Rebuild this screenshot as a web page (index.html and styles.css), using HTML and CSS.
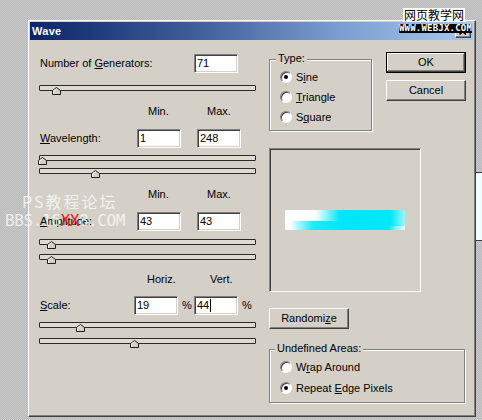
FILE: index.html
```html
<!DOCTYPE html>
<html>
<head>
<meta charset="utf-8">
<title>Wave</title>
<link rel="stylesheet" href="styles.css">
</head>
<body>
<div class="bgwin"></div>
<div class="desk">
  <div class="window">
    <div class="titlebar">
      <span class="title">Wave</span>
      <span class="close"><svg width="8" height="7" viewBox="0 0 8 7"><path d="M0.5 0.5L7 6.5M7 0.5L0.5 6.5" stroke="#000" stroke-width="1.6" fill="none"/></svg></span>
    </div>
    <div class="content">
      <div class="left">
        <div class="row r1"><span class="lbl">Number of <u>G</u>enerators:</span><span class="field">71</span></div>
        <div class="slider s1"><div class="track"></div><svg class="thumb" style="left:13px" viewBox="0 0 9 8"><path d="M0.5 7.5V3.5L4.5 0.5L8.5 3.5V7.5Z" fill="#d4d0c8" stroke="#1e1e1e"/><path d="M1.5 7V3.9L4.5 1.7" stroke="#fff" fill="none"/></svg></div>
        <div class="heads h1"><span class="h-min">Min.</span><span>Max.</span></div>
        <div class="row r2"><span class="lbl"><u>W</u>avelength:</span><span class="field">1</span><span class="field gap">248</span></div>
        <div class="slider s2"><div class="track"></div><svg class="thumb" style="left:-1px" viewBox="0 0 9 8"><path d="M0.5 7.5V3.5L4.5 0.5L8.5 3.5V7.5Z" fill="#d4d0c8" stroke="#1e1e1e"/><path d="M1.5 7V3.9L4.5 1.7" stroke="#fff" fill="none"/></svg></div>
        <div class="slider s3"><div class="track"></div><svg class="thumb" style="left:52px" viewBox="0 0 9 8"><path d="M0.5 7.5V3.5L4.5 0.5L8.5 3.5V7.5Z" fill="#d4d0c8" stroke="#1e1e1e"/><path d="M1.5 7V3.9L4.5 1.7" stroke="#fff" fill="none"/></svg></div>
        <div class="heads h2"><span class="h-min">Min.</span><span>Max.</span></div>
        <div class="row r3"><span class="lbl"><u>A</u>mplitude:</span><span class="field">43</span><span class="field gap">43</span></div>
        <div class="slider s4"><div class="track"></div><svg class="thumb" style="left:8px" viewBox="0 0 9 8"><path d="M0.5 7.5V3.5L4.5 0.5L8.5 3.5V7.5Z" fill="#d4d0c8" stroke="#1e1e1e"/><path d="M1.5 7V3.9L4.5 1.7" stroke="#fff" fill="none"/></svg></div>
        <div class="slider s5"><div class="track"></div><svg class="thumb" style="left:8px" viewBox="0 0 9 8"><path d="M0.5 7.5V3.5L4.5 0.5L8.5 3.5V7.5Z" fill="#d4d0c8" stroke="#1e1e1e"/><path d="M1.5 7V3.9L4.5 1.7" stroke="#fff" fill="none"/></svg></div>
        <div class="heads h3"><span class="h-horiz">Horiz.</span><span>Vert.</span></div>
        <div class="row r4"><span class="lbl"><u>S</u>cale:</span><span class="field">19</span><span class="pct">%</span><span class="field">44<span class="caret"></span></span><span class="pct">%</span></div>
        <div class="slider s6"><div class="track"></div><svg class="thumb" style="left:37px" viewBox="0 0 9 8"><path d="M0.5 7.5V3.5L4.5 0.5L8.5 3.5V7.5Z" fill="#d4d0c8" stroke="#1e1e1e"/><path d="M1.5 7V3.9L4.5 1.7" stroke="#fff" fill="none"/></svg></div>
        <div class="slider s7"><div class="track"></div><svg class="thumb" style="left:91px" viewBox="0 0 9 8"><path d="M0.5 7.5V3.5L4.5 0.5L8.5 3.5V7.5Z" fill="#d4d0c8" stroke="#1e1e1e"/><path d="M1.5 7V3.9L4.5 1.7" stroke="#fff" fill="none"/></svg></div>
      </div>
      <div class="right">
        <div class="top">
          <div class="group type">
            <span class="glabel">Type:</span>
            <div class="opts">
              <div class="opt"><span class="radio on"></span><span>S<u>i</u>ne</span></div>
              <div class="opt"><span class="radio"></span><span><u>T</u>riangle</span></div>
              <div class="opt"><span class="radio"></span><span>S<u>q</u>uare</span></div>
            </div>
          </div>
          <div class="buttons">
            <div class="btn default">OK</div>
            <div class="btn">Cancel</div>
          </div>
        </div>
        <div class="preview"><div class="wave"></div></div>
        <div class="btn randomize">Randomi<u>z</u>e</div>
        <div class="group undef">
          <span class="glabel">Undefined Areas:</span>
          <div class="opts">
            <div class="opt"><span class="radio"></span><span>W<u>r</u>ap Around</span></div>
            <div class="opt"><span class="radio on"></span><span>Repeat <u>E</u>dge Pixels</span></div>
          </div>
        </div>
      </div>
    </div>
  </div>
</div>
<div class="wm-cn">网页教学网</div>
<div class="wm-url">WWW.WEBJX.COM</div>
<div class="wm-ps">PS教程论坛</div>
<div class="wm-bbs">BBS.16<span class="x">XX</span>8.COM</div>
</body>
</html>
```
FILE: styles.css
```css
* { box-sizing: border-box; }

body {
  margin: 0;
  width: 482px;
  height: 420px;
  overflow: hidden;
  position: relative;
  background: repeating-conic-gradient(#bababa 0 25%, #c8c8c8 0 50%) 0 0 / 2px 2px;
  font-family: "Liberation Sans", Arial, sans-serif;
  font-size: 11px;
  line-height: 13px;
  color: #000;
}

u { text-decoration: underline; text-underline-offset: 1px; }

.desk { padding: 20px 0 0 28px; }

.bgwin {
  position: absolute;
  left: 476px;
  top: 172px;
  width: 6px;
  height: 69px;
  background: #effdfd;
  border-top: 1px solid #3a3a3a;
  border-bottom: 1px solid #3a3a3a;
}

.window {
  width: 448px;
  height: 397px;
  background: #d4d0c8;
  border: 1px solid;
  border-color: #fff #404040 #404040 #fff;
  box-shadow: inset -1px -1px 0 #808080;
  padding: 1px 2px 2px 1px;
  display: flex;
  flex-direction: column;
}

.titlebar {
  height: 18px;
  flex: none;
  display: flex;
  align-items: center;
  justify-content: space-between;
  padding: 0 2px;
  background: linear-gradient(to right, #0c2568 0%, #44629e 40%, #7c9ed0 70%, #a6c8ee 100%);
}

.title { color: #fff; font-weight: bold; font-size: 11px; letter-spacing: 0.3px; }

.close {
  width: 16px;
  height: 14px;
  background: #d4d0c8;
  border: 1px solid;
  border-color: #fff #404040 #404040 #fff;
  box-shadow: inset -1px -1px 0 #808080;
  display: flex;
  align-items: center;
  justify-content: center;
}

.content { display: flex; flex: 1; }

.left {
  width: 217px;
  margin-left: 9px;
  display: flex;
  flex-direction: column;
}

.row { display: flex; align-items: center; height: 19px; flex: none; }
.lbl { padding-left: 1px; }
.r1 .lbl { width: 155px; }
.r2 .lbl, .r3 .lbl { width: 98px; }
.r4 .lbl { width: 95px; }

.field {
  width: 44px;
  height: 19px;
  flex: none;
  background: #fff;
  border: 1px solid;
  border-color: #808080 #fff #fff #808080;
  box-shadow: inset 1px 1px 0 #404040, inset -1px -1px 0 #d4d0c8;
  padding-left: 2px;
  display: flex;
  align-items: center;
}
.gap { margin-left: 16px; }
.pct { width: 10px; margin-left: 4px; margin-right: 2px; }
.caret { width: 1px; height: 13px; background: #000; margin-left: 1px; }

.heads { display: flex; height: 13px; flex: none; }
.h-min { margin-left: 109px; width: 59px; }
.h-horiz { margin-left: 108px; width: 63px; }

.slider { position: relative; height: 10px; flex: none; }
.track {
  height: 6px;
  border: 1px solid #2a2a2a;
  background: #dedad2;
  border-radius: 1px;
}
.thumb { position: absolute; top: 2px; width: 9px; height: 8px; }

.r1 { margin-top: 14px; }
.s1 { margin-top: 12px; }
.h1 { margin-top: 10px; }
.r2 { margin-top: 11px; }
.s2 { margin-top: 7px; }
.s3 { margin-top: 3px; }
.h2 { margin-top: 10px; }
.r3 { margin-top: 11px; }
.s4 { margin-top: 8px; }
.s5 { margin-top: 5px; }
.h3 { margin-top: 9px; }
.r4 { margin-top: 10px; }
.s6 { margin-top: 7px; }
.s7 { margin-top: 6px; }

.right {
  width: 197px;
  margin-left: 13px;
  display: flex;
  flex-direction: column;
}

.top { display: flex; align-items: flex-start; margin-top: 12px; }

.group {
  border: 1px solid #808080;
  box-shadow: inset 1px 1px 0 #fff, 1px 1px 0 #fff;
  display: flex;
  flex-direction: column;
}
.glabel {
  align-self: flex-start;
  height: 13px;
  margin-top: -8px;
  margin-left: 6px;
  padding: 0 2px;
  background: #d4d0c8;
}
.opts { display: flex; flex-direction: column; margin-top: 2px; }
.opt { display: flex; align-items: center; height: 20px; margin-left: 10px; }

.type { width: 103px; margin-top: 7px; padding-bottom: 3px; }

.undef { width: 196px; margin-top: 20px; padding-bottom: 4px; }
.undef .glabel { margin-left: 5px; }
.undef .opts { gap: 1px; }

.radio {
  width: 12px;
  height: 12px;
  flex: none;
  border-radius: 50%;
  background: #fff;
  border: 1px solid;
  border-color: #808080 #fff #fff #808080;
  box-shadow: inset 1px 1px 0 #404040;
  margin-right: 4px;
  display: flex;
  align-items: center;
  justify-content: center;
}
.radio.on::after {
  content: "";
  width: 4px;
  height: 4px;
  border-radius: 50%;
  background: #000;
}

.buttons { margin-left: 14px; display: flex; flex-direction: column; gap: 7px; }

.btn {
  width: 80px;
  height: 21px;
  flex: none;
  display: flex;
  align-items: center;
  justify-content: center;
  background: #d4d0c8;
  border: 1px solid;
  border-color: #fff #404040 #404040 #fff;
  box-shadow: inset -1px -1px 0 #808080;
}
.btn.default {
  border-color: #000;
  box-shadow: inset -1px -1px 0 #404040, inset 1px 1px 0 #fff, inset -2px -2px 0 #808080;
}

.preview {
  margin-top: 17px;
  width: 152px;
  height: 144px;
  flex: none;
  border: 1px solid;
  border-color: #808080 #fff #fff #808080;
  box-shadow: inset 1px 1px 0 #404040;
  display: flex;
  align-items: center;
  justify-content: center;
}

.wave {
  width: 120px;
  height: 20px;
  background:
    linear-gradient(to right, #fff 25%, rgba(255,255,255,0.6) 33%, rgba(255,255,255,0) 45%) top / 100% 55% no-repeat,
    linear-gradient(to right, rgba(255,255,255,0) 85%, rgba(255,255,255,0.7) 100%) bottom / 100% 20% no-repeat,
    linear-gradient(to right, #fff 4%, #9ef5fc 12%, #1ee9f9 24%, #00e6f8 50%, #00e8fa 88%, #a0f5fd 100%);
}

.randomize { margin-top: 16px; }

.wm-cn {
  position: absolute;
  left: 403px;
  top: 8px;
  padding: 0 1px;
  background: #fff;
  font-family: "Noto Sans CJK SC", sans-serif;
  font-size: 12px;
  line-height: 14px;
  color: #000;
}

.wm-url {
  position: absolute;
  left: 399px;
  top: 24px;
  width: 73px;
  height: 9px;
  background: #000;
  color: #fff;
  font-family: "DejaVu Sans Mono", monospace;
  font-weight: bold;
  font-size: 9px;
  line-height: 9px;
  letter-spacing: 0.2px;
  text-align: center;
}

.wm-ps {
  position: absolute;
  left: 22px;
  top: 192px;
  font-family: "Noto Sans CJK SC", sans-serif;
  font-size: 16px;
  line-height: 18px;
  letter-spacing: 2px;
  color: rgba(255,255,255,0.72);
}

.wm-bbs {
  position: absolute;
  left: 5px;
  top: 212px;
  font-family: "DejaVu Sans Mono", monospace;
  font-size: 16px;
  line-height: 18px;
  letter-spacing: -0.4px;
  color: rgba(255,255,255,0.72);
}
.wm-bbs .x { color: #ee2020; }
```
